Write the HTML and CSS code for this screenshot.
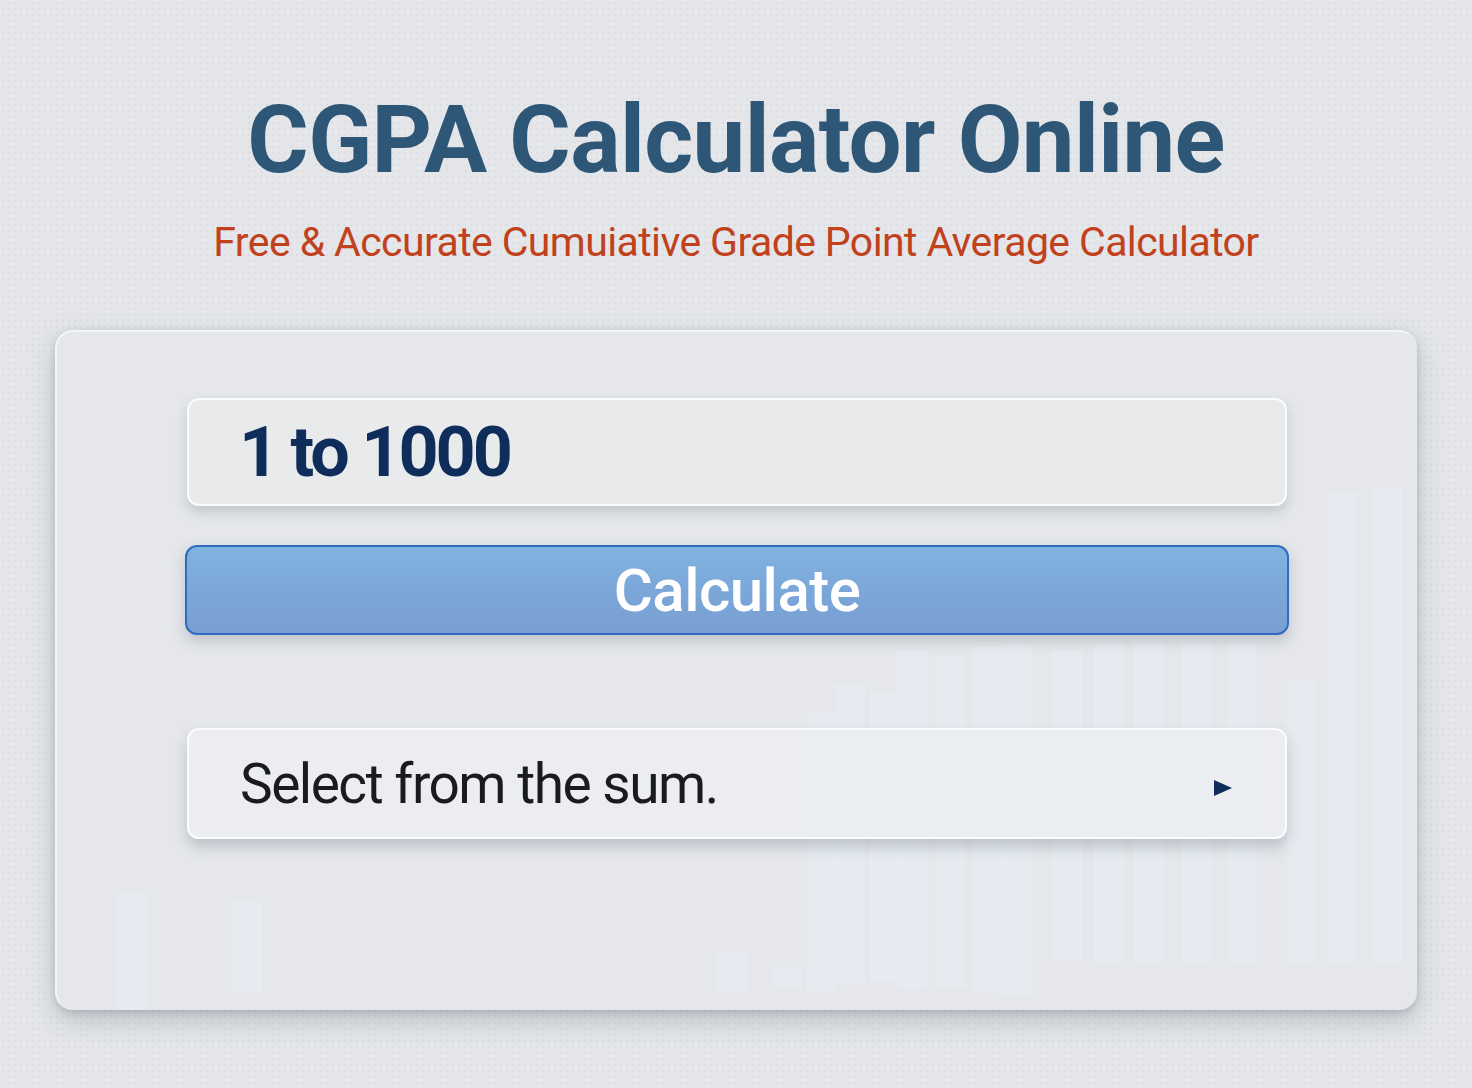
FILE: index.html
```html
<!DOCTYPE html>
<html lang="en">

<head>
    <meta charset="UTF-8">
    <meta name="viewport" content="width=device-width, initial-scale=1.0">
    <title>CGPA Calculator Online</title>
    <link rel="stylesheet" href="styles.css">
</head>

<body>
    <header class="header">
        <h1 class="title">CGPA Calculator Online</h1>
        <p class="subtitle">Free &amp; Accurate Cumuiative Grade Point Average Calculator</p>
    </header>

    <main class="card">
        <!-- faint bar chart behind the form -->
        <div class="bars" aria-hidden="true">
            <span class="bar" style="left: 60px; top: 560px; height: 120px"></span>
            <span class="bar" style="left: 175px; top: 570px; height: 90px"></span>
            <span class="bar" style="left: 660px; top: 620px; height: 40px"></span>
            <span class="bar" style="left: 715px; top: 635px; height: 20px"></span>
            <span class="bar" style="left: 750px; top: 380px; height: 280px"></span>
            <span class="bar" style="left: 778px; top: 352px; height: 300px"></span>
            <span class="bar" style="left: 812px; top: 360px; height: 290px"></span>
            <span class="bar" style="left: 840px; top: 318px; height: 340px"></span>
            <span class="bar" style="left: 878px; top: 325px; height: 330px"></span>
            <span class="bar" style="left: 916px; top: 315px; height: 345px"></span>
            <span class="bar" style="left: 944px; top: 312px; height: 350px"></span>
            <span class="bar" style="left: 995px; top: 318px; height: 310px"></span>
            <span class="bar" style="left: 1037px; top: 312px; height: 320px"></span>
            <span class="bar" style="left: 1077px; top: 310px; height: 320px"></span>
            <span class="bar" style="left: 1125px; top: 310px; height: 320px"></span>
            <span class="bar" style="left: 1170px; top: 310px; height: 320px"></span>
            <span class="bar" style="left: 1230px; top: 348px; height: 282px"></span>
            <span class="bar" style="left: 1270px; top: 160px; height: 470px"></span>
            <span class="bar" style="left: 1315px; top: 156px; height: 474px"></span>
        </div>

        <form class="form" autocomplete="off">
            <input type="text" class="field" value="1 to 1000">
            <button type="submit" class="calc">Calculate</button>
            <label class="select">
                <span>Select from the sum.</span>
                <svg class="arrow" width="20" height="18" viewBox="0 0 20 18">
                    <path d="M1 1 L19 9 L1 17 Z" fill="#0f2c5c" />
                </svg>
            </label>
        </form>
    </main>
</body>

</html>
```

FILE: styles.css
```css
* {
    box-sizing: border-box;
}

body {
    margin: 0;
    min-height: 1088px;
    padding: 0 55px;
    overflow: hidden;
    background-color: #e4e6e9;
    background-image: radial-gradient(circle, #dcdee1 1px, transparent 1.2px);
    background-size: 6px 6px;
    font-family: Roboto, 'Liberation Sans', sans-serif;
}

.header {
    padding-top: 90px;
    text-align: center;
}

.title {
    margin: 0;
    color: #2e5677;
    font-size: 94px;
    font-weight: 700;
    line-height: 100px;
    letter-spacing: -0.6px;
}

.subtitle {
    margin: 28px 0 0;
    color: #c2411d;
    font-size: 41px;
    font-weight: 400;
    line-height: 48px;
    letter-spacing: -0.6px;
}

.card {
    position: relative;
    height: 680px;
    margin-top: 64px;
    padding: 66px 130px 0;
    border-radius: 18px;
    border-top: 2px solid #f4f5f6;
    border-left: 2px solid #f4f5f6;
    background-color: #e5e7ea;
    box-shadow: 0 10px 24px rgba(80, 90, 105, 0.28), 0 2px 6px rgba(80, 90, 105, 0.2);
}

.bars {
    position: absolute;
    inset: 0;
    overflow: hidden;
    border-radius: 18px;
}

.bar {
    position: absolute;
    width: 30px;
    background-color: rgba(230, 236, 243, 0.75);
}

.form {
    position: relative;
    display: flex;
    flex-direction: column;
}

.field {
    height: 108px;
    padding: 0 50px;
    border: 2px solid #fbfcfd;
    border-radius: 12px;
    background-color: #e8eaec;
    box-shadow: 0 6px 12px rgba(70, 80, 95, 0.22);
    color: #0f2d5a;
    font-family: inherit;
    font-size: 70px;
    font-weight: 700;
    letter-spacing: -3px;
    outline: 0;
}

.calc {
    height: 90px;
    margin: 39px -2px 0;
    border: 2px solid #2f6cc0;
    border-radius: 12px;
    background-image: linear-gradient(180deg, #80b3e0, #7ba6d8 55%, #7a9fd2);
    box-shadow: 0 6px 14px rgba(70, 80, 95, 0.25);
    color: #fff;
    font-family: inherit;
    font-size: 60px;
    font-weight: 500;
    letter-spacing: -0.5px;
    cursor: pointer;
}

.select {
    display: flex;
    align-items: center;
    justify-content: space-between;
    height: 111px;
    margin-top: 93px;
    padding: 0 52px 0 51px;
    border: 2px solid #fbfcfd;
    border-radius: 12px;
    background-color: rgba(236, 238, 240, 0.92);
    box-shadow: 0 8px 14px rgba(70, 80, 95, 0.25);
    color: #1a1b1d;
    font-size: 55px;
    letter-spacing: -1.5px;
}

.arrow {
    margin-top: 8px;
}
```
